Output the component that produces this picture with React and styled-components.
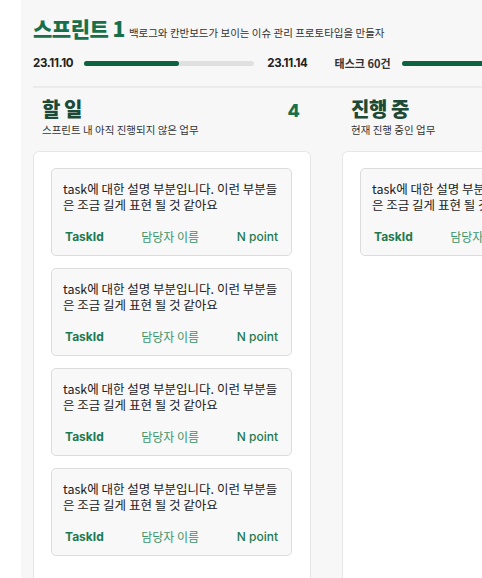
import React from "react";
import styled, { createGlobalStyle } from "styled-components";

const GlobalStyle = createGlobalStyle`
  body {
    margin: 0;
    background: #ffffff;
    font-family: "Noto Sans CJK KR", "Noto Sans", sans-serif;
    overflow: hidden;
  }
`;

const columns = [
  { title: "할 일", desc: "스프린트 내 아직 진행되지 않은 업무", count: 4, tasks: 4 },
  { title: "진행 중", desc: "현재 진행 중인 업무", count: null, tasks: 1 },
];

const App = () => {
  return (
    <>
      <GlobalStyle />
      <Board>
        <Header>
          <TitleRow>
            <Title>스프린트 1</Title>
            <Goal>백로그와 칸반보드가 보이는 이슈 관리 프로토타입을 만들자</Goal>
          </TitleRow>
          <InfoRow>
            <DateText>23.11.10</DateText>
            <Track>
              <Fill $fill={56} />
            </Track>
            <DateText>23.11.14</DateText>
            <TaskCount>태스크 60건</TaskCount>
            <Track>
              <Fill $fill={80} />
            </Track>
          </InfoRow>
        </Header>
        <Columns>
          {columns.map((col, i) => (
            <Column key={i}>
              <ColumnHead>
                <div>
                  <ColumnTitle>{col.title}</ColumnTitle>
                  <ColumnDesc>{col.desc}</ColumnDesc>
                </div>
                {col.count !== null && <Count>{col.count}</Count>}
              </ColumnHead>
              <Lane>
                {Array.from({ length: col.tasks }).map((_, idx) => (
                  <TaskCard key={idx}>
                    <TaskText>
                      task에 대한 설명 부분입니다. 이런 부분들
                      <br />은 조금 길게 표현 될 것 같아요
                    </TaskText>
                    <TaskFoot>
                      <TaskId>TaskId</TaskId>
                      <Assignee>담당자 이름</Assignee>
                      <Point>N point</Point>
                    </TaskFoot>
                  </TaskCard>
                ))}
              </Lane>
            </Column>
          ))}
        </Columns>
      </Board>
    </>
  );
};

const Board = styled.main`
  margin-left: 21px;
  min-height: 578px;
  width: 700px;
  background: #f7f7f7;
  padding: 0 12px;
  box-sizing: border-box;
`;

const Header = styled.header`
  padding-top: 16px;
  padding-bottom: 16px;
  border-bottom: 2px solid #ebebeb;
`;

const TitleRow = styled.div`
  display: flex;
  align-items: baseline;
  gap: 4px;
`;

const Title = styled.h1`
  margin: 0;
  font-size: 21px;
  font-weight: 800;
  color: #17704a;
  letter-spacing: -0.5px;
  line-height: 24px;
`;

const Goal = styled.span`
  font-size: 10.5px;
  color: #333;
`;

const InfoRow = styled.div`
  display: flex;
  align-items: center;
  margin-top: 16px;
  height: 14px;
`;

const DateText = styled.span`
  font-family: "Inter", "Noto Sans CJK KR", sans-serif;
  font-size: 11.5px;
  font-weight: 700;
  color: #222;
  letter-spacing: -0.3px;
`;

const TaskCount = styled.span`
  font-size: 11px;
  font-weight: 700;
  color: #333;
  margin-left: 27px;
`;

const Track = styled.div`
  flex: none;
  width: 170px;
  height: 5px;
  margin: 0 13px 0 11px;
  border-radius: 3px;
  background: #e0e0e0;
  display: flex;
`;

const Fill = styled.div`
  width: ${({ $fill }) => $fill}%;
  border-radius: 3px;
  background: #0c6341;
`;

const Columns = styled.div`
  display: flex;
  gap: 31px;
  padding-top: 9px;
`;

const Column = styled.section`
  width: 278px;
  flex: none;
`;

const ColumnHead = styled.div`
  display: flex;
  justify-content: space-between;
  align-items: flex-start;
  padding: 0 11px 0 9px;
  margin-bottom: 14px;
`;

const ColumnTitle = styled.h2`
  margin: 0;
  font-size: 20px;
  font-weight: 800;
  color: #1d4a36;
  letter-spacing: -0.5px;
  line-height: 24px;
`;

const ColumnDesc = styled.p`
  margin: 2px 0 0;
  font-size: 10.5px;
  color: #333;
  line-height: 14px;
`;

const Count = styled.span`
  font-family: "Inter", sans-serif;
  font-size: 18px;
  font-weight: 800;
  color: #17704a;
  line-height: 24px;
  margin-top: 2px;
`;

const Lane = styled.div`
  background: #ffffff;
  border: 1px solid #e6e6e6;
  border-bottom: none;
  border-radius: 6px 6px 0 0;
  padding: 16px 18px 40px 17px;
  min-height: 420px;
  display: flex;
  flex-direction: column;
  gap: 12px;
`;

const TaskCard = styled.article`
  background: #f8f8f8;
  border: 1px solid #dcdcdc;
  border-radius: 5px;
  height: 88px;
  box-sizing: border-box;
  padding: 12px 13px 0 11px;
  display: flex;
  flex-direction: column;
`;

const TaskText = styled.p`
  margin: 0;
  font-size: 12.5px;
  line-height: 16px;
  color: #222;
`;

const TaskFoot = styled.div`
  display: flex;
  justify-content: space-between;
  margin-top: 16px;
  padding: 0 0 0 2px;
  font-size: 12px;
  line-height: 16px;
  color: #1d7a50;
`;

const TaskId = styled.span`
  font-family: "Inter", sans-serif;
  font-weight: 700;
`;

const Assignee = styled.span`
  color: #3a9468;
`;

const Point = styled.span`
  font-family: "Inter", sans-serif;
  font-weight: 500;
`;

export default App;
